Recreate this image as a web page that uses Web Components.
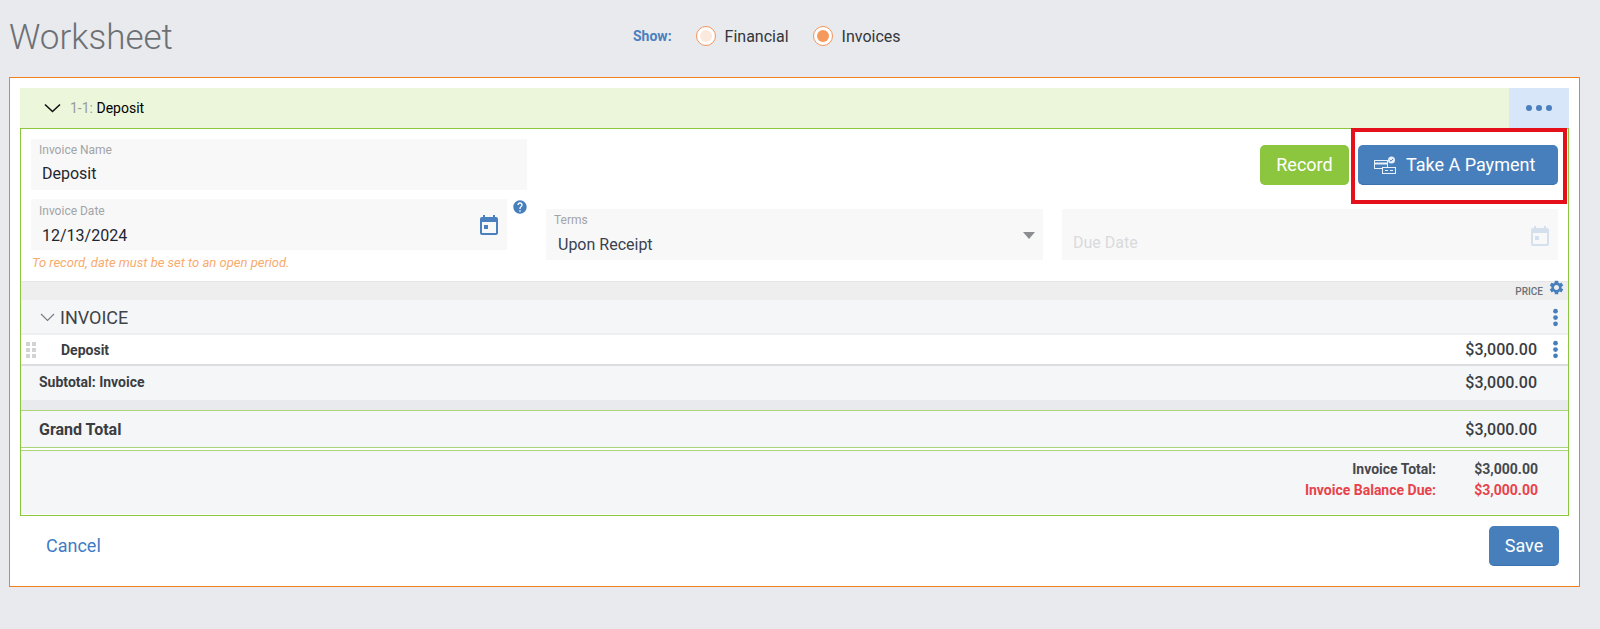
<!DOCTYPE html>
<html>
<head>
<meta charset="utf-8">
<title>Worksheet</title>
<style>
  html, body { margin: 0; height: 100%; }
  body {
    background: #e9eaee;
    font-family: Roboto, "Liberation Sans", sans-serif;
    color: #33363b;
  }
</style>
</head>
<body>
<ws-page>
  <ws-topbar></ws-topbar>
  <ws-panel>
    <ws-section-head number="1-1:" name="Deposit"></ws-section-head>
    <ws-invoice-body></ws-invoice-body>
    <ws-footer></ws-footer>
  </ws-panel>
</ws-page>

<script>
const ICONS = {
  calendar: `<path d="M19 4h-1V2h-2v2H8V2H6v2H5c-1.1 0-2 .9-2 2v14c0 1.1.9 2 2 2h14c1.1 0 2-.9 2-2V6c0-1.1-.9-2-2-2zm0 16H5V9h14v11z"/><path d="M7 12h4v4H7z"/>`,
  help: `<path d="M12 2C6.48 2 2 6.48 2 12s4.48 10 10 10 10-4.48 10-10S17.52 2 12 2zm1 17h-2v-2h2v2zm2.07-7.75l-.9.92C13.45 12.9 13 13.5 13 15h-2v-.5c0-1.1.45-2.1 1.17-2.83l1.24-1.26c.37-.36.59-.86.59-1.41 0-1.1-.9-2-2-2s-2 .9-2 2H8c0-2.21 1.79-4 4-4s4 1.79 4 4c0 .88-.36 1.68-.93 2.25z"/>`,
  gear: `<path d="M19.14 12.94c.04-.3.06-.61.06-.94 0-.32-.02-.64-.07-.94l2.03-1.58c.18-.14.23-.41.12-.61l-1.92-3.32c-.12-.22-.37-.29-.59-.22l-2.39.96c-.5-.38-1.03-.7-1.62-.94l-.36-2.54c-.04-.24-.24-.41-.48-.41h-3.84c-.24 0-.43.17-.47.41l-.36 2.54c-.59.24-1.13.57-1.62.94l-2.39-.96c-.22-.08-.47 0-.59.22L2.74 8.87c-.12.21-.08.47.12.61l2.03 1.58c-.05.3-.09.63-.09.94s.02.64.07.94l-2.03 1.58c-.18.14-.23.41-.12.61l1.92 3.32c.12.22.37.29.59.22l2.39-.96c.5.38 1.03.7 1.62.94l.36 2.54c.05.24.24.41.48.41h3.84c.24 0 .44-.17.47-.41l.36-2.54c.59-.24 1.13-.56 1.62-.94l2.39.96c.22.08.47 0 .59-.22l1.92-3.32c.12-.22.07-.47-.12-.61l-2.01-1.58zM12 15.6c-1.98 0-3.6-1.62-3.6-3.6s1.62-3.6 3.6-3.6 3.6 1.62 3.6 3.6-1.62 3.6-3.6 3.6z"/>`,
  kebab: `<circle cx="12" cy="4" r="3"/><circle cx="12" cy="12" r="3"/><circle cx="12" cy="20" r="3"/>`
};

function icon(name, size, color) {
  return `<svg width="${size}" height="${size}" viewBox="0 0 24 24" fill="${color}" style="display:block">${ICONS[name]}</svg>`;
}

class WsPage extends HTMLElement {
  constructor() {
    super();
    this.attachShadow({ mode: "open" }).innerHTML = `
      <style>
        :host { display: block; padding: 0 20px 0 9px; }
      </style>
      <slot></slot>`;
  }
}

class WsRadio extends HTMLElement {
  constructor() {
    super();
    const checked = this.hasAttribute("checked");
    this.attachShadow({ mode: "open" }).innerHTML = `
      <style>
        :host { display: inline-flex; align-items: center; gap: 9px; font-size: 16px; color: #33363b; }
        .ring {
          width: 20px; height: 20px; box-sizing: border-box;
          border: 1px solid #f3945a; border-radius: 50%;
          background: #fff;
          display: flex; align-items: center; justify-content: center;
        }
        .dot { width: 12px; height: 12px; border-radius: 50%; background: ${checked ? "#f59a5c" : "#fbe9de"}; }
      </style>
      <span class="ring"><span class="dot"></span></span>
      <slot></slot>`;
  }
}

class WsTopbar extends HTMLElement {
  constructor() {
    super();
    this.attachShadow({ mode: "open" }).innerHTML = `
      <style>
        :host { display: block; height: 77px; position: relative; }
        .bar { display: flex; height: 72px; align-items: center; }
        h1 { margin: 2px 0 0; width: 624px; font-size: 35px; font-weight: 300; color: #6d7074; }
        .show { font-size: 14px; font-weight: 700; color: #4a80bf; margin-right: 24px; }
        ws-radio + ws-radio { margin-left: 24px; }
      </style>
      <div class="bar">
        <h1>Worksheet</h1>
        <span class="show">Show:</span>
        <ws-radio>Financial</ws-radio>
        <ws-radio checked>Invoices</ws-radio>
      </div>`;
  }
}

class WsPanel extends HTMLElement {
  constructor() {
    super();
    this.attachShadow({ mode: "open" }).innerHTML = `
      <style>
        :host {
          display: block; box-sizing: border-box; height: 510px;
          background: #fff; border: 1px solid #f17f1f;
          padding: 10px 10px 0;
        }
      </style>
      <slot></slot>`;
  }
}

class WsSectionHead extends HTMLElement {
  constructor() {
    super();
    this.attachShadow({ mode: "open" }).innerHTML = `
      <style>
        :host { display: flex; height: 40px; background: #ebf6da; font-size: 14px; }
        .title { flex: 1; display: flex; align-items: center; padding: 0 0 0 24px; box-sizing: border-box; gap: 9px; color: #000; }
        .num { color: #9a9c9e; }
        .more { width: 60px; background: #d7e6f8; display: flex; align-items: center; justify-content: center; gap: 4px; }
        .more i { width: 6px; height: 6px; border-radius: 50%; background: #4a80bf; }
      </style>
      <div class="title">
        <svg width="17" height="10" viewBox="0 0 17 10" fill="none" stroke="#111" stroke-width="1.6"><path d="M1 1.5l7.5 7 7.5-7"/></svg>
        <span><span class="num">${this.getAttribute("number")}</span> ${this.getAttribute("name")}</span>
      </div>
      <div class="more"><i></i><i></i><i></i></div>`;
  }
}

class WsField extends HTMLElement {
  constructor() {
    super();
    this.attachShadow({ mode: "open" }).innerHTML = `
      <style>
        :host {
          display: block; box-sizing: border-box; height: 51px;
          background: #f8f8f8; padding: 4px 8px 0; position: relative;
        }
        .label { font-size: 12px; line-height: 14px; color: #a2a4a7; }
        .value { font-size: 16px; line-height: 20px; margin: 7px 0 0 3px; color: #1f2630; }
        :host([placeholder]) .value { margin-top: 20px; color: #d9dadc; }
        :host([placeholder]) .end { top: 15px; }
        :host([compact]) .value { margin-left: 4px; margin-top: 8px; color: #3a4250; }
        :host([low]) { padding-top: 5px; }
        :host([low]) .value { margin-top: 8px; }
        .end { position: absolute; right: 6px; top: 14px; }
      </style>
      <div class="label"></div>
      <div class="value"><slot></slot></div>
      <div class="end"><slot name="end"></slot></div>`;
    this.shadowRoot.querySelector(".label").textContent = this.getAttribute("label") || "";
  }
}

class WsButton extends HTMLElement {
  constructor() {
    super();
    this.attachShadow({ mode: "open" }).innerHTML = `
      <style>
        :host {
          display: inline-flex; align-items: center; justify-content: center; gap: 10px;
          box-sizing: border-box; height: 40px; padding: 0 16px;
          border-radius: 5px; font-size: 18px; color: #fff; background: #477fbd;
          border-bottom: 1px solid #3a72b0;
        }
        :host([kind="green"]) { background: #8cc63f; border-bottom-color: #8cc63f; }
        :host([start]) { justify-content: flex-start; }
      </style>
      <slot></slot>`;
  }
}

class WsInvoiceBody extends HTMLElement {
  constructor() {
    super();
    this.attachShadow({ mode: "open" }).innerHTML = `
      <style>
        :host {
          display: block; box-sizing: border-box; height: 388px;
          border: 1px solid #8cc63f; position: relative;
        }
        .form { height: 152px; box-sizing: border-box; padding: 10px 10px 0; }
        .row1 { display: flex; justify-content: space-between; }
        .row1 ws-field { width: 496px; }
        .buttons { display: flex; gap: 9px; padding-top: 6px; }
        .pay { width: 200px; }
        .rec { width: 89px; }
        .row2 { display: flex; margin-top: 9px; }
        .date { width: 476px; }
        .date ws-field { width: 100%; }
        .hint { font-size: 13px; font-style: italic; color: #f7ab6f; margin-top: 6px; line-height: 14px; padding-left: 1px; }
        .help { width: 39px; padding: 0 0 0 5px; box-sizing: border-box; }
        .terms { width: 497px; margin-top: 10px; }
        .due { width: 496px; margin: 10px 0 0 19px; }
        .price-bar {
          height: 19px; box-sizing: border-box; background: #eeeeef; border-top: 1px solid #e6e6e8;
          display: flex; justify-content: flex-end; align-items: center; gap: 5px; padding-right: 3px;
          font-size: 10px; font-weight: 500; color: #6c7178;
        }
        .price-bar svg { margin-top: -8px; }
        .group {
          height: 35px; box-sizing: border-box; background: #f5f6f8; border-bottom: 2px solid #eeeff1;
          display: flex; align-items: center; padding: 2px 0 0 19px; font-size: 18px; color: #3f434a;
        }
        .group .txt { flex: 1; margin-left: 5px; }
        .item {
          height: 31px; box-sizing: border-box; background: #fff; border-bottom: 2px solid #dcdde0;
          display: flex; align-items: center; position: relative;
          font-size: 14px; font-weight: 700; color: #3a3d42;
        }
        .grip { width: 10px; margin: 0 25px 0 5px; display: grid; grid-template-columns: 4px 4px; gap: 2px; }
        .grip i { height: 4px; background: #d2d3d5; }
        .item .txt { flex: 1; }
        .amt { font-size: 16px; font-weight: 500; color: #3a3d42; text-align: right; }
        .kebab { width: 31px; box-sizing: border-box; display: flex; justify-content: flex-end; padding-right: 3px; }
        .kebab-slot { width: 31px; flex: none; }
        .sub {
          height: 34px; box-sizing: border-box; background: #f5f6f8;
          display: flex; align-items: center; padding: 0 0 2px 18px;
          font-size: 14px; font-weight: 700; color: #3a3d42;
        }
        .sub .txt { flex: 1; }
        .strip { height: 10px; background: #e9eaed; }
        .grand {
          height: 38px; box-sizing: border-box; background: #f5f6f8;
          border-top: 1px solid #a9d47a; border-bottom: 1px solid #a9d47a;
          display: flex; align-items: center; padding-left: 18px;
          font-size: 16px; font-weight: 700; color: #3a3d42;
        }
        .grand .txt { flex: 1; }
        .totals {
          height: 64px; box-sizing: border-box; margin-top: 2px; background: #f5f6f8;
          border-top: 1px solid #a9d47a;
          padding: 7px 30px 0 0;
          display: grid; grid-template-columns: 1fr 102px; grid-auto-rows: 21px; align-items: center;
          font-size: 14px; font-weight: 700; color: #45484d; text-align: right;
        }
        .due-row { color: #e8424a; }
      </style>
      <div class="form">
        <div class="row1">
          <ws-field label="Invoice Name">Deposit</ws-field>
          <div class="buttons">
            <ws-button kind="green" class="rec">Record</ws-button>
            <ws-button class="pay" start>
              <svg width="22" height="18" viewBox="0 0 22 18" fill="none" stroke="#e8f0f8" stroke-width="1">
                <rect x="0.5" y="4.5" width="13" height="8"/>
                <path d="M1 7.5h12" stroke-width="2"/>
                <rect x="8.5" y="11.5" width="13" height="6" fill="#477fbd"/>
                <path d="M11 14.5h3M16 14.5h3"/>
                <circle cx="17.5" cy="4" r="3.5" fill="#e8f0f8" stroke="none"/>
                <path d="M15.8 4l1.2 1.2 2.2-2.4" stroke="#477fbd"/>
              </svg>
              <span>Take A Payment</span>
            </ws-button>
          </div>
        </div>
        <div class="row2">
          <div class="date">
            <ws-field label="Invoice Date" low>12/13/2024<span slot="end">${icon("calendar", 24, "#4a80bf")}</span></ws-field>
            <div class="hint">To record, date must be set to an open period.</div>
          </div>
          <div class="help">${icon("help", 16, "#477fbd")}</div>
          <ws-field class="terms" compact label="Terms">Upon Receipt<svg slot="end" width="12" height="7" viewBox="0 0 12 7" fill="#8b8d90" style="display:block;margin:9px 2px 0 0"><path d="M0 0h12L6 7z"/></svg></ws-field>
          <ws-field class="due" placeholder>Due Date<span slot="end">${icon("calendar", 24, "#d5e0ee")}</span></ws-field>
        </div>
      </div>
      <div class="price-bar"><span>PRICE</span>${icon("gear", 17, "#477fbd")}</div>
      <div class="group">
        <svg width="15" height="9" viewBox="0 0 15 9" fill="none" stroke="#77797c" stroke-width="1.1"><path d="M1 1l6.5 6.5L14 1"/></svg>
        <span class="txt">INVOICE</span>
        <div class="kebab">${icon("kebab", 19, "#477fbd")}</div>
      </div>
      <div class="item">
        <div class="grip"><i></i><i></i><i></i><i></i><i></i><i></i></div>
        <span class="txt">Deposit</span>
        <span class="amt">$3,000.00</span>
        <div class="kebab">${icon("kebab", 19, "#477fbd")}</div>
      </div>
      <div class="sub"><span class="txt">Subtotal: Invoice</span><span class="amt">$3,000.00</span><div class="kebab-slot"></div></div>
      <div class="strip"></div>
      <div class="grand"><span class="txt">Grand Total</span><span class="amt">$3,000.00</span><div class="kebab-slot"></div></div>
      <div class="totals">
        <span>Invoice Total:</span><span>$3,000.00</span>
        <span class="due-row">Invoice Balance Due:</span><span class="due-row">$3,000.00</span>
      </div>
      <ws-callout></ws-callout>`;
  }
}

class WsCallout extends HTMLElement {
  constructor() {
    super();
    this.attachShadow({ mode: "open" }).innerHTML = `
      <style>
        :host {
          position: absolute; right: 1px; top: -1px; width: 216px; height: 76px;
          box-sizing: border-box; border: 4px solid #e4111b; pointer-events: none;
        }
      </style>`;
  }
}

class WsFooter extends HTMLElement {
  constructor() {
    super();
    this.attachShadow({ mode: "open" }).innerHTML = `
      <style>
        :host { display: flex; align-items: center; justify-content: space-between; padding: 10px 10px 0 26px; }
        .cancel { font-size: 18px; color: #3f7cc4; margin-top: -2px; }
        ws-button { width: 70px; padding: 0; }
      </style>
      <span class="cancel">Cancel</span>
      <ws-button>Save</ws-button>`;
  }
}

customElements.define("ws-page", WsPage);
customElements.define("ws-radio", WsRadio);
customElements.define("ws-topbar", WsTopbar);
customElements.define("ws-panel", WsPanel);
customElements.define("ws-section-head", WsSectionHead);
customElements.define("ws-field", WsField);
customElements.define("ws-button", WsButton);
customElements.define("ws-callout", WsCallout);
customElements.define("ws-invoice-body", WsInvoiceBody);
customElements.define("ws-footer", WsFooter);
</script>
</body>
</html>
